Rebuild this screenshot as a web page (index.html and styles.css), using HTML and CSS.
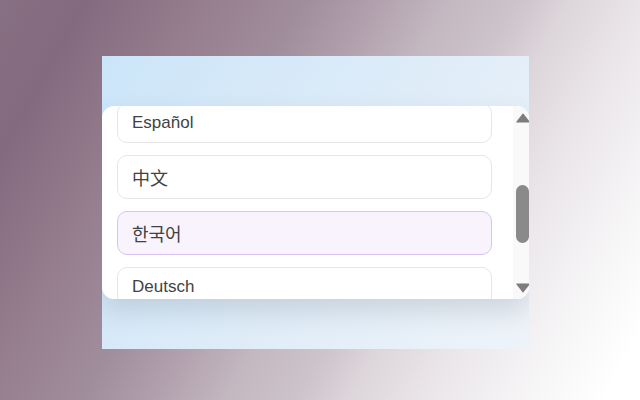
FILE: index.html
```html
<!DOCTYPE html>
<html lang="en">
<head>
<meta charset="utf-8">
<title>Language picker</title>
<link rel="stylesheet" href="styles.css">
</head>
<body>
<div class="stage">
  <div class="frame">
    <div class="panel">
      <div class="viewport">
        <ul class="list">
          <li class="item">Español</li>
          <li class="item" lang="zh">中文</li>
          <li class="item selected" lang="ko">한국어</li>
          <li class="item">Deutsch</li>
        </ul>
      </div>
      <div class="scrollbar">
        <svg class="arrow" width="14" height="10" viewBox="0 0 14 10"><path d="M7 1.2 L13.2 9 H0.8 Z" fill="#7d7d7d" stroke="#7d7d7d" stroke-width="1.2" stroke-linejoin="round"/></svg>
        <div class="track"><div class="thumb"></div></div>
        <svg class="arrow" width="14" height="10" viewBox="0 0 14 10"><path d="M7 8.8 L13.2 1 H0.8 Z" fill="#7d7d7d" stroke="#7d7d7d" stroke-width="1.2" stroke-linejoin="round"/></svg>
      </div>
    </div>
  </div>
</div>
</body>
</html>
```
FILE: styles.css
```css
html, body {
  margin: 0;
  padding: 0;
}
body {
  width: 640px;
  height: 400px;
  overflow: hidden;
  background: linear-gradient(119deg, #877083 0%, #846a7f 10%, #978090 25%, #a08d9c 35%, #ae9ca9 42%, #c3b7c0 52%, #cdc3ca 60%, #dcd5da 66%, #e9e4e8 74%, #f7f6f7 87%, #ffffff 96%);
  font-family: "Liberation Sans", Arial, sans-serif;
}
.stage {
  padding: 56px 0 0 102px;
}
.frame {
  width: 427px;
  height: 293px;
  padding-top: 50px;
  box-sizing: border-box;
  background: linear-gradient(125deg, #cbe5f8 0%, #dcebf8 45%, #eef3f9 100%);
  overflow: hidden;
}
.panel {
  height: 193px;
  background: #ffffff;
  border-radius: 12px;
  box-shadow: 0 12px 26px rgba(60, 70, 80, 0.16);
  display: flex;
  overflow: hidden;
}
.viewport {
  flex: 1;
  overflow: hidden;
  padding: 0 21px 0 15px;
}
.list {
  list-style: none;
  margin: -3px 0 0 0;
  padding: 0;
  display: flex;
  flex-direction: column;
  gap: 12px;
}
.item {
  box-sizing: border-box;
  border: 1px solid #e6e6e6;
  border-radius: 10px;
  padding: 10px 14px;
  line-height: 18px;
  font-size: 17px;
  color: #424242;
  background: #ffffff;
}
.item[lang="zh"] {
  font-family: "Noto Sans CJK SC", sans-serif;
  font-size: 18px;
  line-height: 22px;
}
.item[lang="ko"] {
  font-family: "Noto Sans CJK KR", sans-serif;
  font-size: 18px;
  line-height: 22px;
}
.item.selected {
  background: #f8f3fd;
  border-color: #d9c2f5;
}
.scrollbar {
  width: 16px;
  background: #f9f9f9;
  display: flex;
  flex-direction: column;
  align-items: flex-end;
  padding: 7px 0 6px 0;
  box-sizing: border-box;
}
.arrow {
  display: block;
  flex: none;
  margin-right: -1px;
}
.track {
  flex: 1;
  width: 13px;
  padding-top: 62px;
}
.thumb {
  width: 13px;
  height: 58px;
  background: #8a8a8a;
  border-radius: 7px;
}
```
